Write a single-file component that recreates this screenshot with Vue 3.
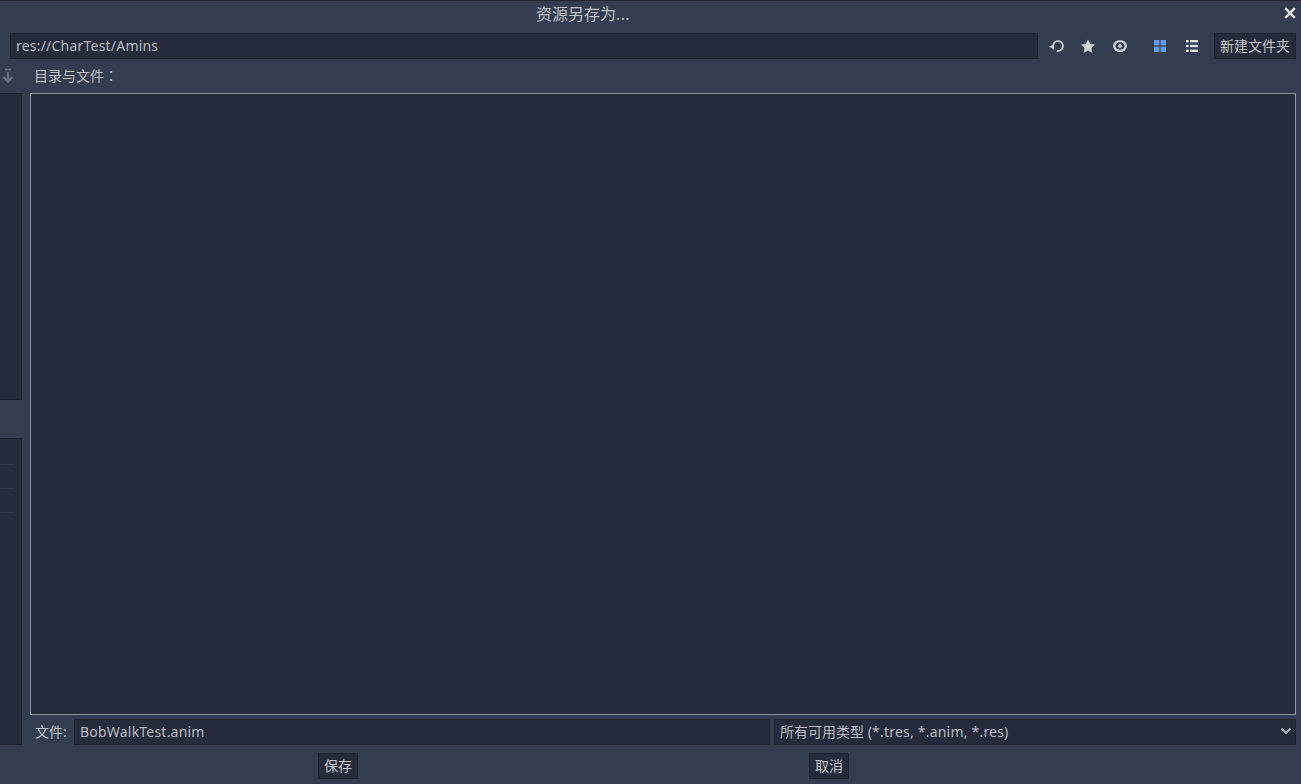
<script setup>
const sideRows = [0, 1, 2];
</script>

<template>
  <div class="dialog">
    <div class="title-bar">
      <span class="title">资源另存为<span class="dots">...</span></span>
      <svg class="close" width="14" height="14" viewBox="0 0 14 14">
        <path d="M2.2 2.2 L11.8 11.8 M11.8 2.2 L2.2 11.8" stroke="#e8e9ec" stroke-width="2.4" fill="none" />
      </svg>
    </div>

    <div class="path-row">
      <div class="field path-field latin">res://CharTest/Amins</div>
      <div class="tools">
        <svg class="tool" width="16" height="16" viewBox="0 0 16 16">
          <path d="M5.2 6.8 A4.9 4.9 0 1 1 8.8 12.8" stroke="#c6c9cf" stroke-width="1.9" fill="none" />
          <path d="M1.2 8.4 L6.2 6 L6.2 12 Z" fill="#c6c9cf" />
        </svg>
        <svg class="tool" width="16" height="16" viewBox="0 0 16 16">
          <path d="M8 1.6 L10.1 6 L15 6.6 L11.4 10 L12.4 15 L8 12.6 L3.6 15 L4.6 10 L1 6.6 L5.9 6 Z" fill="#d2d4d8" />
        </svg>
        <svg class="tool" width="16" height="16" viewBox="0 0 16 16">
          <ellipse cx="8" cy="8" rx="5.8" ry="4.9" stroke="#c6c9cf" stroke-width="2.4" fill="none" />
          <circle cx="8" cy="8" r="1.9" fill="#c6c9cf" />
        </svg>
        <div class="divider"></div>
        <svg class="tool" width="16" height="16" viewBox="0 0 16 16">
          <g fill="#699ce8">
            <rect x="2" y="2" width="5.4" height="5.4" />
            <rect x="8.6" y="2" width="5.4" height="5.4" />
            <rect x="2" y="8.6" width="5.4" height="5.4" />
            <rect x="8.6" y="8.6" width="5.4" height="5.4" />
          </g>
        </svg>
        <svg class="tool" width="16" height="16" viewBox="0 0 16 16">
          <g fill="#dcdee1">
            <rect x="2" y="2" width="2.6" height="2.4" />
            <rect x="6" y="2" width="8" height="2.4" />
            <rect x="2" y="6.8" width="2.6" height="2.4" />
            <rect x="6" y="6.8" width="8" height="2.4" />
            <rect x="2" y="11.6" width="2.6" height="2.4" />
            <rect x="6" y="11.6" width="8" height="2.4" />
          </g>
        </svg>
      </div>
      <button class="btn new-folder">新建文件夹</button>
    </div>

    <div class="middle">
      <div class="sidebar">
        <div class="side-head">
          <svg width="12" height="16" viewBox="0 0 12 16">
            <path d="M3 1.5 H9" stroke="#6a7282" stroke-width="1.8" />
            <path d="M6 4 V13.5 M1.6 9 L6 13.6 L10.4 9" stroke="#6a7282" stroke-width="2.2" fill="none" />
          </svg>
        </div>
        <div class="side-panel top-panel"></div>
        <div class="side-panel bottom-panel">
          <div v-for="row in sideRows" :key="row" class="side-row"></div>
        </div>
      </div>

      <div class="content">
        <div class="list-label">目录与文件<span class="colon">：</span></div>
        <div class="file-list"></div>
        <div class="file-row">
          <span class="file-label">文件:</span>
          <div class="field name-field latin">BobWalkTest.anim</div>
          <div class="field type-field">
            <span>所有可用类型 <span class="latin">(*.tres, *.anim, *.res)</span></span>
            <svg width="14" height="10" viewBox="0 0 14 10">
              <path d="M2.5 2.5 L7 7 L11.5 2.5" stroke="#b4b7bd" stroke-width="1.9" fill="none" />
            </svg>
          </div>
        </div>
      </div>
    </div>

    <div class="actions">
      <button class="btn">保存</button>
      <button class="btn">取消</button>
    </div>
  </div>
</template>

<style scoped>
.dialog {
  width: 1301px;
  height: 784px;
  box-sizing: border-box;
  background: #343c4f;
  border-top: 1px solid #1f2430;
  display: flex;
  flex-direction: column;
  overflow: hidden;
  color: #bfc1c7;
  font-family: "Noto Sans", "Noto Sans CJK SC", sans-serif;
  font-size: 14px;
}

.latin {
  letter-spacing: 0.21px;
}

.title-bar {
  height: 32px;
  flex: none;
  display: flex;
  align-items: center;
  justify-content: center;
  position: relative;
  padding-bottom: 8px;
  box-sizing: border-box;
}

.title {
  font-size: 16px;
  margin-right: 135px;
}

.dots {
  letter-spacing: 0.4px;
}

.close {
  position: absolute;
  right: 4px;
  top: 5px;
}

.path-row {
  height: 26px;
  flex: none;
  display: flex;
  padding: 0 5px 0 10px;
}

.field {
  box-sizing: border-box;
  background: #252b3a;
  border: 1px solid #20242f;
  display: flex;
  align-items: center;
  padding: 0 5px 2px;
  white-space: nowrap;
  color: #b9bcc2;
}

.path-field {
  width: 1028px;
}

.tools {
  width: 176px;
  display: flex;
  align-items: center;
  padding-left: 10px;
  box-sizing: border-box;
}

.tool {
  flex: none;
  margin-right: 16px;
}

.divider {
  width: 1px;
  height: 26px;
  background: #434b5d;
  margin-right: 13px;
  margin-left: -5px;
}

.btn {
  box-sizing: border-box;
  height: 26px;
  padding: 0 5px 2px;
  background: #252b3a;
  border: 1px solid #20242f;
  color: #c3c5ca;
  font: inherit;
  white-space: nowrap;
}

.new-folder {
  width: 82px;
}

.middle {
  flex: none;
  height: 686px;
  display: flex;
}

.sidebar {
  width: 22px;
  flex: none;
  display: flex;
  flex-direction: column;
}

.side-head {
  height: 34px;
  flex: none;
  display: flex;
  align-items: center;
  justify-content: flex-end;
  padding-right: 8px;
  box-sizing: border-box;
}

.side-panel {
  box-sizing: border-box;
  background: #252b3a;
  border: 1px solid #1f2430;
  border-left: none;
}

.top-panel {
  height: 307px;
  flex: none;
}

.bottom-panel {
  height: 307px;
  flex: none;
  margin-top: 38px;
  padding-top: 25px;
}

.side-row {
  height: 1px;
  width: 14px;
  background: #2f3545;
  margin-bottom: 23px;
}

.content {
  width: 1266px;
  margin-left: 8px;
  display: flex;
  flex-direction: column;
}

.list-label {
  height: 34px;
  flex: none;
  display: flex;
  align-items: center;
  padding: 0 0 2px 4px;
  box-sizing: border-box;
}

.colon {
  font-family: "Noto Sans CJK TC", sans-serif;
}

.file-list {
  height: 622px;
  flex: none;
  box-sizing: border-box;
  background: #252b3a;
  border: 1px solid #8f939d;
}

.file-row {
  margin-top: 4px;
  height: 26px;
  flex: none;
  display: flex;
  align-items: center;
}

.file-label {
  width: 44px;
  flex: none;
  padding: 0 0 2px 5px;
  box-sizing: border-box;
}

.name-field {
  width: 696px;
  height: 26px;
}

.type-field {
  width: 522px;
  height: 26px;
  margin-left: 4px;
  justify-content: space-between;
  padding-right: 2px;
}

.actions {
  flex: none;
  margin-top: 8px;
  display: flex;
  padding-left: 318px;
  gap: 451px;
}

.actions .btn {
  width: 40px;
}
</style>
